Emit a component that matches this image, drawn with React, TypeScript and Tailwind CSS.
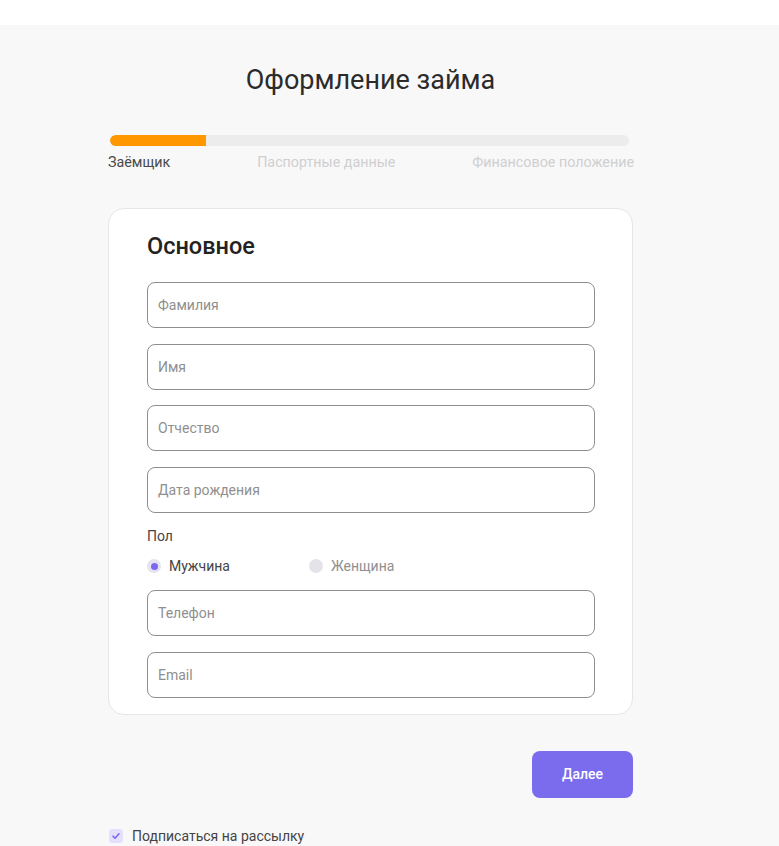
const fields = ["Фамилия", "Имя", "Отчество", "Дата рождения"];

const Field = ({ placeholder }: { placeholder: string }) => (
  <input
    type="text"
    placeholder={placeholder}
    className="h-[46px] w-full rounded-lg border border-[#8e8e8e] bg-white px-[10px] text-[14px] text-[#333] outline-none placeholder:text-[#8f8f8f]"
  />
);

export default function App() {
  return (
    <div className="min-h-[846px] bg-[#f8f8f9] font-['Roboto',sans-serif]">
      <div className="h-[25px] bg-white" />
      <div className="ml-[108px] w-[525px] pb-4">
        <h1 className="mt-[38px] text-center text-[27px] leading-[34px] text-[#2b2b2b]">
          Оформление займа
        </h1>

        <div className="mt-[38px] px-[2px] pr-[4px]">
          <div className="h-[11px] w-full overflow-hidden rounded-full bg-[#ececec]">
            <div className="h-full w-[96px] rounded-l-full bg-[#ff9800]" />
          </div>
        </div>
        <div className="mt-[7px] flex justify-between text-[14.3px] leading-[18px]">
          <span className="text-[#4a4a4a]">Заёмщик</span>
          <span className="pl-[10px] text-[#cfcfcf]">Паспортные данные</span>
          <span className="-mr-[1px] text-[#cfcfcf]">Финансовое положение</span>
        </div>

        <div className="mt-[37px] rounded-2xl border border-[#e6e6e6] bg-white pb-[16px] pl-[38px] pr-[37px] pt-[22px]">
          <h2 className="text-[23.5px] font-medium leading-[30px] text-[#222]">Основное</h2>
          <div className="mt-[21px] flex flex-col gap-[15.7px]">
            {fields.map((f) => (
              <Field key={f} placeholder={f} />
            ))}
          </div>

          <div className="mt-[14px] text-[14px] leading-[18px] text-[#444]">Пол</div>
          <div className="mt-[12px] flex items-center text-[14px] leading-[18px]">
            <label className="flex w-[162px] items-center gap-[8px] text-[#444]">
              <span className="flex h-[14px] w-[14px] items-center justify-center rounded-full bg-[#e5e3ef]">
                <span className="h-[7px] w-[7px] rounded-full bg-[#7b68ee]" />
              </span>
              Мужчина
            </label>
            <label className="flex items-center gap-[8px] text-[#8f8f8f]">
              <span className="h-[14px] w-[14px] rounded-full bg-[#e5e3ea]" />
              Женщина
            </label>
          </div>

          <div className="mt-[15px] flex flex-col gap-[15.7px]">
            <Field placeholder="Телефон" />
            <Field placeholder="Email" />
          </div>
        </div>

        <div className="mt-[36px] flex justify-end">
          <button className="h-[47px] w-[101px] rounded-lg bg-[#7b6cee] text-[14px] font-medium text-white">
            Далее
          </button>
        </div>

        <label className="mt-[29px] flex items-center gap-[9px] text-[14px] leading-[18px] text-[#444]">
          <span className="ml-[1px] flex h-[14px] w-[14px] items-center justify-center rounded-[3px] bg-[#e4e0fb]">
            <svg width="10" height="10" viewBox="0 0 10 10" fill="none">
              <path d="M2 5.2 4 7.2 8 2.8" stroke="#7b68ee" strokeWidth="1.6" strokeLinecap="round" strokeLinejoin="round" />
            </svg>
          </span>
          Подписаться на рассылку
        </label>
      </div>
    </div>
  );
}
